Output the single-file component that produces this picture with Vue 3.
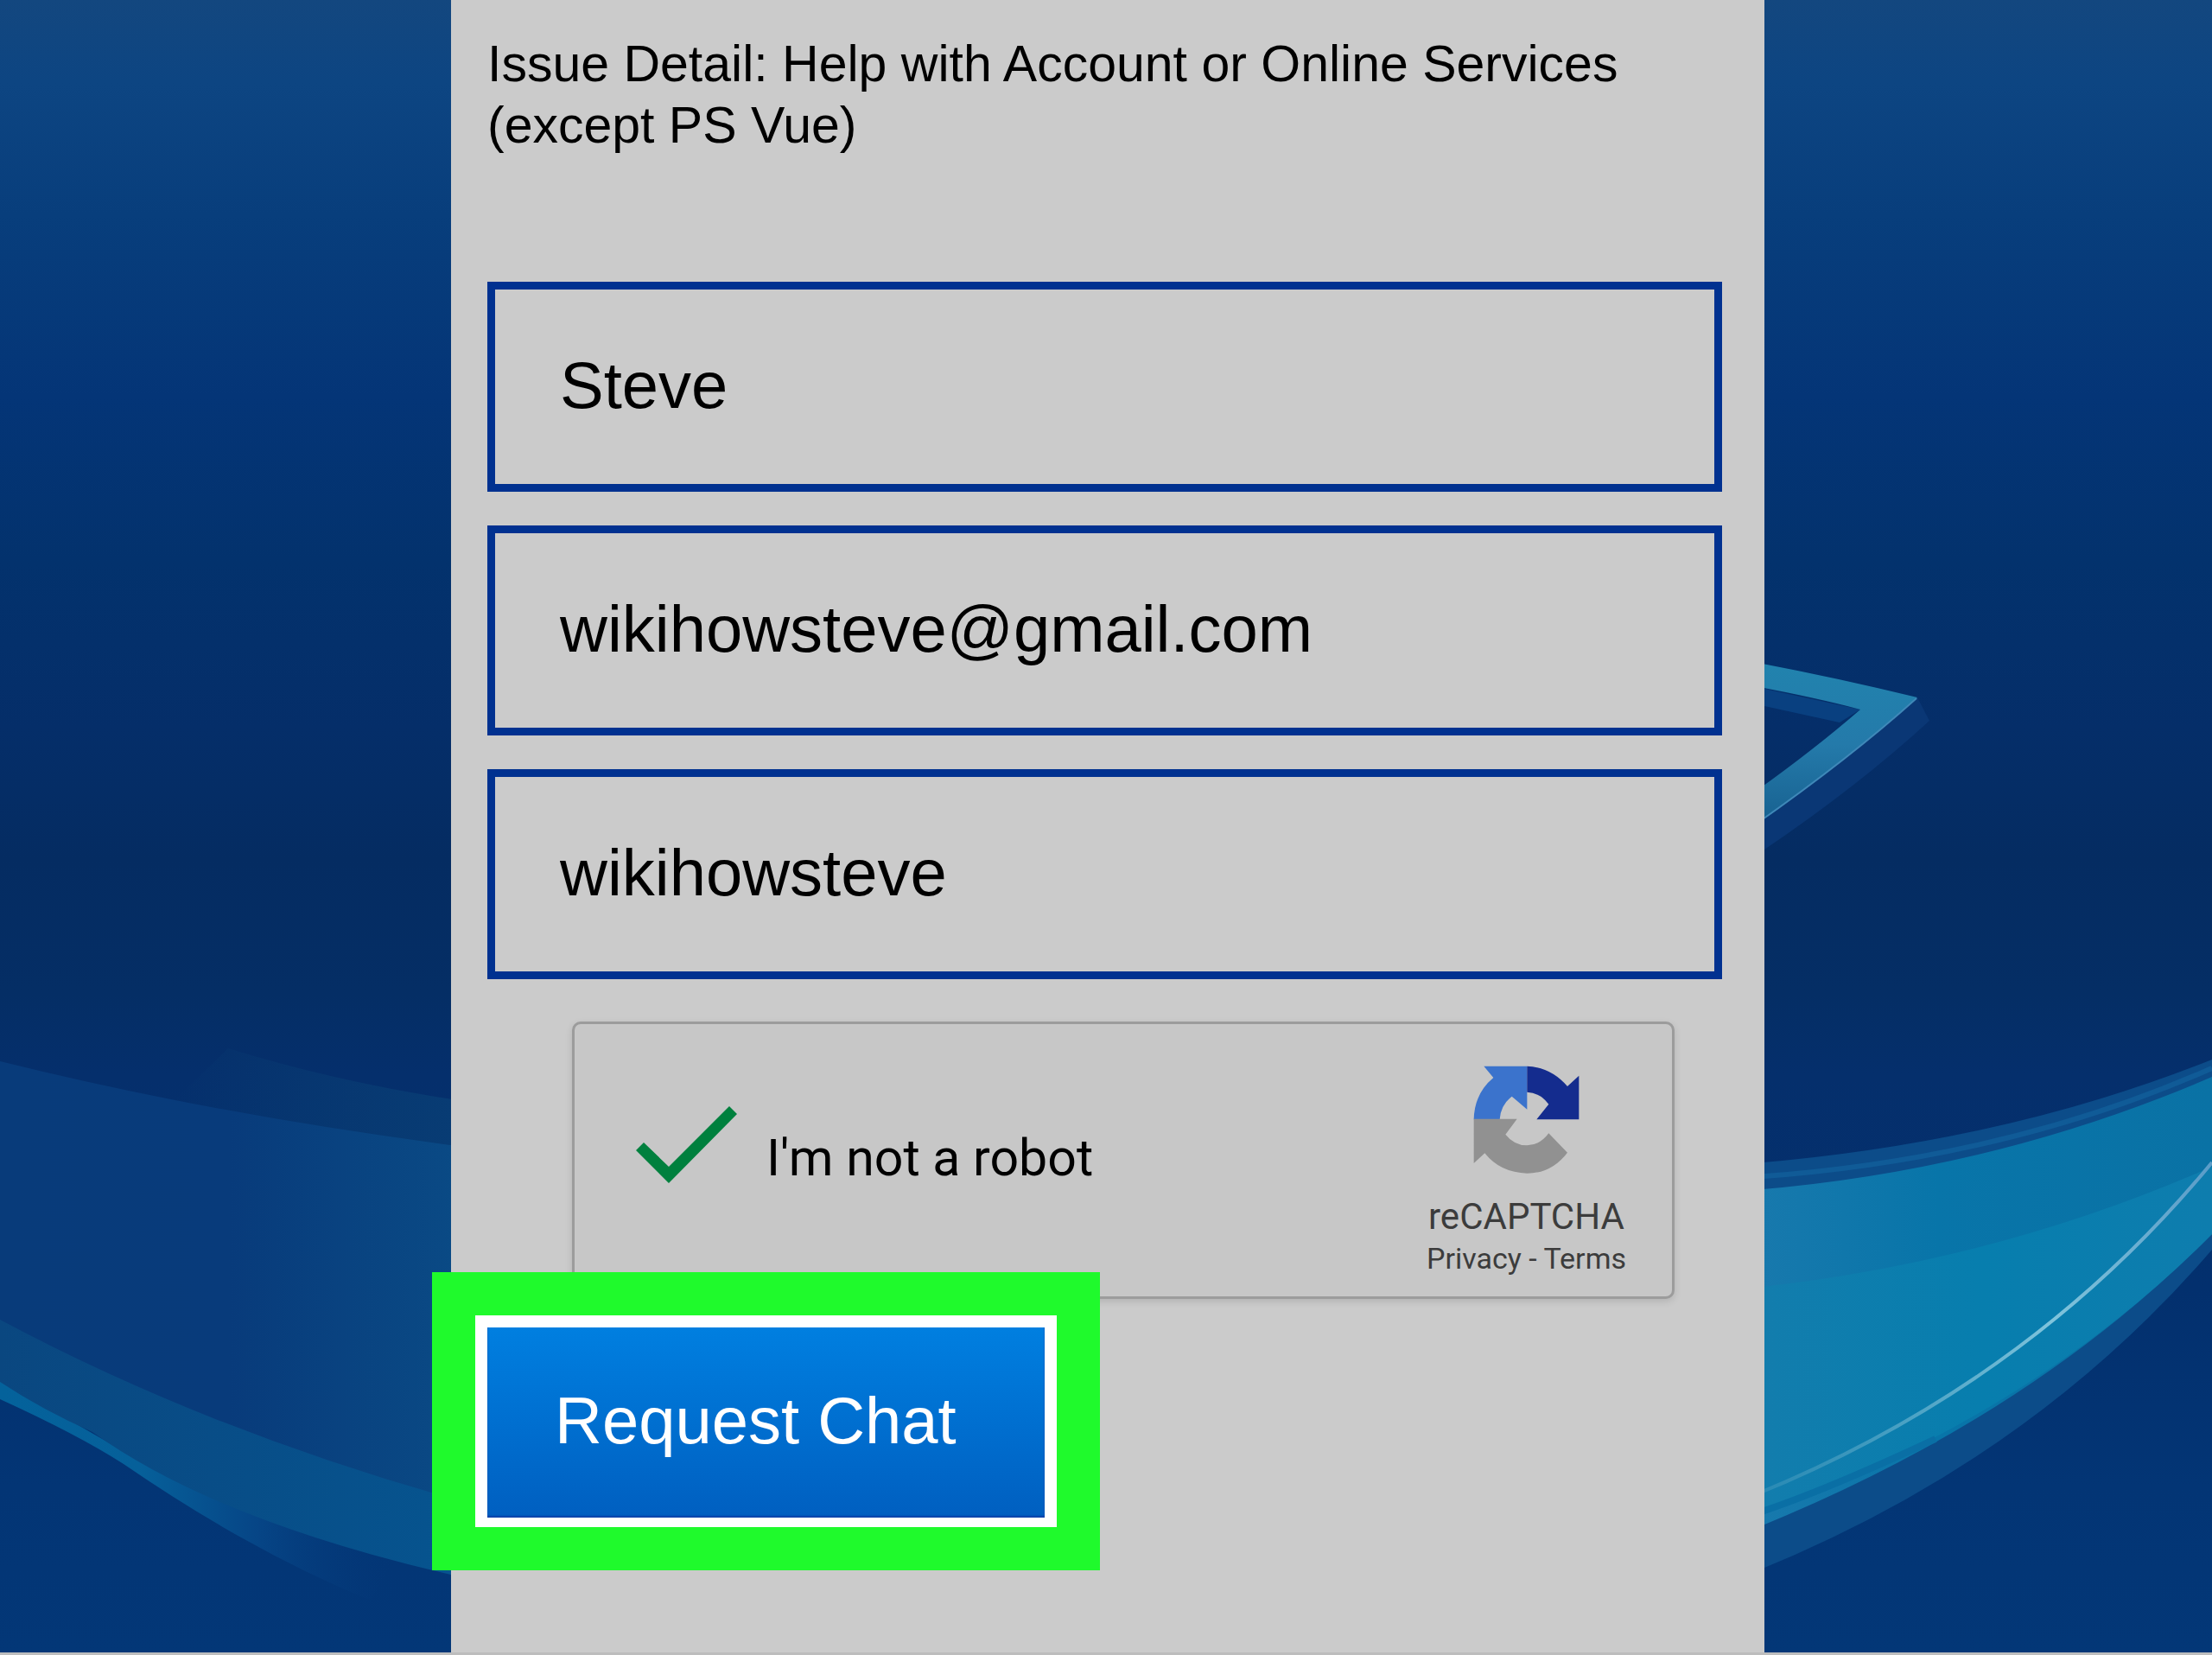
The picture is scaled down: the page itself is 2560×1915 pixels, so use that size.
<script setup>
import { reactive, ref } from 'vue'

const form = reactive({ name: 'Steve', email: 'wikihowsteve@gmail.com', psnId: 'wikihowsteve' })
const fields = [
  { key: 'name', label: 'Name', type: 'text' },
  { key: 'email', label: 'Email', type: 'email' },
  { key: 'psnId', label: 'Online ID', type: 'text' },
]
const verified = ref(true)
</script>

<template>
  <div class="page">
    <svg class="backdrop" viewBox="0 0 2560 1912" preserveAspectRatio="none" aria-hidden="true">
      <defs>
        <linearGradient id="haze" x1="0" x2="1">
          <stop offset="0" stop-color="#083b7a" />
          <stop offset="0.5" stop-color="#083b7b" />
          <stop offset="1" stop-color="#0a4a85" />
        </linearGradient>
        <linearGradient id="veil" x1="0" x2="1">
          <stop offset="0" stop-color="#0a4075" stop-opacity="0" />
          <stop offset="1" stop-color="#083c74" />
        </linearGradient>
        <linearGradient id="ribbon" x1="0" x2="1">
          <stop offset="0" stop-color="#0a4780" />
          <stop offset="1" stop-color="#06548f" />
        </linearGradient>
        <linearGradient id="streak" x1="0" x2="1">
          <stop offset="0" stop-color="#04629b" />
          <stop offset="0.35" stop-color="#06609a" />
          <stop offset="0.65" stop-color="#064586" />
          <stop offset="1" stop-color="#043677" stop-opacity="0" />
        </linearGradient>
        <linearGradient id="upperWave" x1="0" x2="1">
          <stop offset="0" stop-color="#1879ad" />
          <stop offset="0.4" stop-color="#0875a9" />
          <stop offset="1" stop-color="#0a72a5" />
        </linearGradient>
        <linearGradient id="lowerWave" x1="0" x2="1">
          <stop offset="0" stop-color="#137dad" />
          <stop offset="0.5" stop-color="#077eae" />
          <stop offset="1" stop-color="#0e7dae" />
        </linearGradient>
        <linearGradient id="glint" x1="0" x2="1">
          <stop offset="0" stop-color="#3d95ba" stop-opacity="0.5" />
          <stop offset="0.65" stop-color="#7fc4dc" />
          <stop offset="1" stop-color="#5a9cc8" />
        </linearGradient>
        <linearGradient id="edge" x1="0" x2="0" y1="0" y2="1">
          <stop offset="0" stop-color="#2183ae" />
          <stop offset="0.5" stop-color="#247aaa" />
          <stop offset="1" stop-color="#17608f" />
        </linearGradient>
      </defs>

      <path fill="url(#veil)" d="M264 1213Q390 1252 530 1273V1330L200 1275Z" />
      <path fill="url(#haze)" d="M0 1228Q250 1290 530 1326V1740Q230 1660 0 1540Z" />
      <path fill="url(#streak)" d="M0 1597L200 1712Q330 1770 460 1800L429 1852Q290 1795 143 1694Q90 1660 0 1619Z" />
      <path fill="url(#ribbon)" d="M0 1527Q240 1655 530 1736V1824Q250 1760 107 1657Q50 1632 0 1599Z" />

      <path fill="#0a3775" d="M2219 807L2233 834Q2150 910 2042 983V947Z" />
      <path fill="#094080" d="M2042 797L2153 821L2129 836L2042 817Z" />
      <path fill="url(#edge)" d="M2030 766Q2130 785 2219 807Q2140 878 2030 956V917Q2100 867 2153 821Q2100 807 2030 794Z" />
      <path fill="none" stroke="#3f88b8" stroke-width="2" d="M2218 808Q2140 878 2030 955" />

      <path fill="#0c4c89" d="M2030 1346Q2320 1322 2560 1226V1446Q2350 1690 2030 1819Z" />
      <path fill="none" stroke="#105b97" stroke-width="6" d="M2030 1362Q2320 1342 2560 1236" />
      <path fill="url(#upperWave)" d="M2030 1377Q2310 1354 2560 1246V1428Q2350 1640 2030 1769Z" />
      <path fill="url(#lowerWave)" d="M2030 1490Q2310 1460 2560 1350V1428Q2350 1640 2030 1755Z" />
      <path fill="none" stroke="#0a6fa5" stroke-width="8" d="M2030 1752Q2110 1726 2240 1665" />
      <path fill="none" stroke="url(#glint)" stroke-width="4" d="M2030 1730Q2350 1600 2560 1345" />
    </svg>

    <main class="panel">
      <form class="form" @submit.prevent>
        <p class="issue">Issue Detail: Help with Account or Online Services (except PS Vue)</p>

        <div class="fields">
          <input
            v-for="field in fields"
            :key="field.key"
            v-model="form[field.key]"
            class="field"
            :type="field.type"
            :aria-label="field.label"
            spellcheck="false"
          />
        </div>

        <div class="captcha">
          <label class="verify">
            <input v-model="verified" class="tick" type="checkbox" />
            <svg class="check" viewBox="0 0 117 89" aria-hidden="true">
              <path fill="#00803e" d="M0 51L9 42L38 70L108 0L117 9L38 89Z" />
            </svg>
            <span>I'm not a robot</span>
          </label>
          <div class="brand">
            <svg class="logo" viewBox="315 215 375 381" aria-hidden="true">
              <path fill="#3b73cc" d="M355 220H505V370L452 325Q413 355 410 405H320Q322 315 388 260Z" />
              <path fill="#142c8e" d="M505 220Q588 224 645 290L685 253V405H538L580 352Q550 312 505 310Z" />
              <path fill="#919191" d="M320 403H470L430 457Q460 495 505 495Q550 494 580 453L645 520Q590 592 505 592Q412 590 358 522L320 557Z" />
            </svg>
            <span class="brand-name">reCAPTCHA</span>
            <span class="legal"><a href="#privacy">Privacy</a> - <a href="#terms">Terms</a></span>
          </div>
        </div>

        <div class="highlight">
          <button class="submit" type="submit">Request Chat</button>
        </div>
      </form>
    </main>
  </div>
</template>

<style>
body {
  margin: 0;
}
</style>

<style scoped>
.page {
  position: relative;
  display: flex;
  justify-content: center;
  box-sizing: border-box;
  min-height: 100vh;
  padding-left: 4px;
  border-bottom: 3px solid #bdbdbd;
  overflow: hidden;
  background: linear-gradient(
    #13477f 0%,
    #0d4582 5%,
    #083e7c 13%,
    #043577 24%,
    #03326d 34%,
    #052e69 44%,
    #052c62 52%,
    #052e65 60%,
    #052f6c 65%,
    #03306e 78%,
    #033575 90%,
    #033777 100%
  );
  font-family: "Liberation Sans", Arial, sans-serif;
  color: #000;
}

.backdrop {
  position: absolute;
  inset: 0;
  width: 100%;
  height: 100%;
}

.panel {
  position: relative;
  box-sizing: border-box;
  width: 100%;
  max-width: 1520px;
  padding: 39px 49px 95px 42px;
  background: #cbcbcb;
}

.form {
  display: flex;
  flex-direction: column;
}

.issue {
  margin: 0;
  font-size: 59px;
  line-height: 71px;
}

.fields {
  display: flex;
  flex-direction: column;
  gap: 39px;
  margin-top: 145px;
}

.field {
  box-sizing: border-box;
  width: 100%;
  height: 243px;
  padding: 0 75px 5px;
  border: 9px solid #003190;
  border-radius: 0;
  outline: none;
  background: transparent;
  color: #000;
  font: inherit;
  font-size: 76px;
}

.captcha {
  display: flex;
  justify-content: space-between;
  box-sizing: border-box;
  height: 321px;
  margin: 49px 55px 0 98px;
  padding: 47px 53px 0 71px;
  border: 3px solid #9c9c9c;
  border-radius: 10px;
  background: #c7c7c7;
  box-shadow: 0 3px 8px rgba(0, 0, 0, 0.12);
  font-family: Roboto, sans-serif;
}

.verify {
  position: relative;
  display: flex;
  align-items: flex-start;
  gap: 34px;
  padding-top: 48px;
  font-size: 59px;
  line-height: 120px;
}

.tick {
  position: absolute;
  width: 117px;
  height: 89px;
  margin: 0;
  opacity: 0;
}

.check {
  width: 117px;
  height: 89px;
}

.tick:not(:checked) + .check {
  visibility: hidden;
}

.brand {
  display: flex;
  flex-direction: column;
  align-items: center;
  color: #3c3c3c;
}

.logo {
  width: 125px;
  height: 127px;
}

.brand-name {
  margin-top: 25px;
  font-size: 42px;
  line-height: 48px;
}

.legal {
  font-size: 34px;
  line-height: 48px;
}

.legal a {
  color: inherit;
  text-decoration: none;
}

.highlight {
  position: relative;
  align-self: flex-start;
  margin: -31px 0 0 -64px;
  padding: 14px 14px 11px;
  border: 50px solid #1ffa2c;
  background: #fff;
  background-clip: padding-box;
}

.submit {
  display: block;
  width: 645px;
  height: 220px;
  padding: 0 75px 5px 78px;
  border: 0;
  background: linear-gradient(#007fe0, #005fc0);
  box-shadow: inset 0 -2px 2px #0040a8;
  color: #fff;
  font: inherit;
  font-size: 76px;
  text-align: left;
}
</style>
